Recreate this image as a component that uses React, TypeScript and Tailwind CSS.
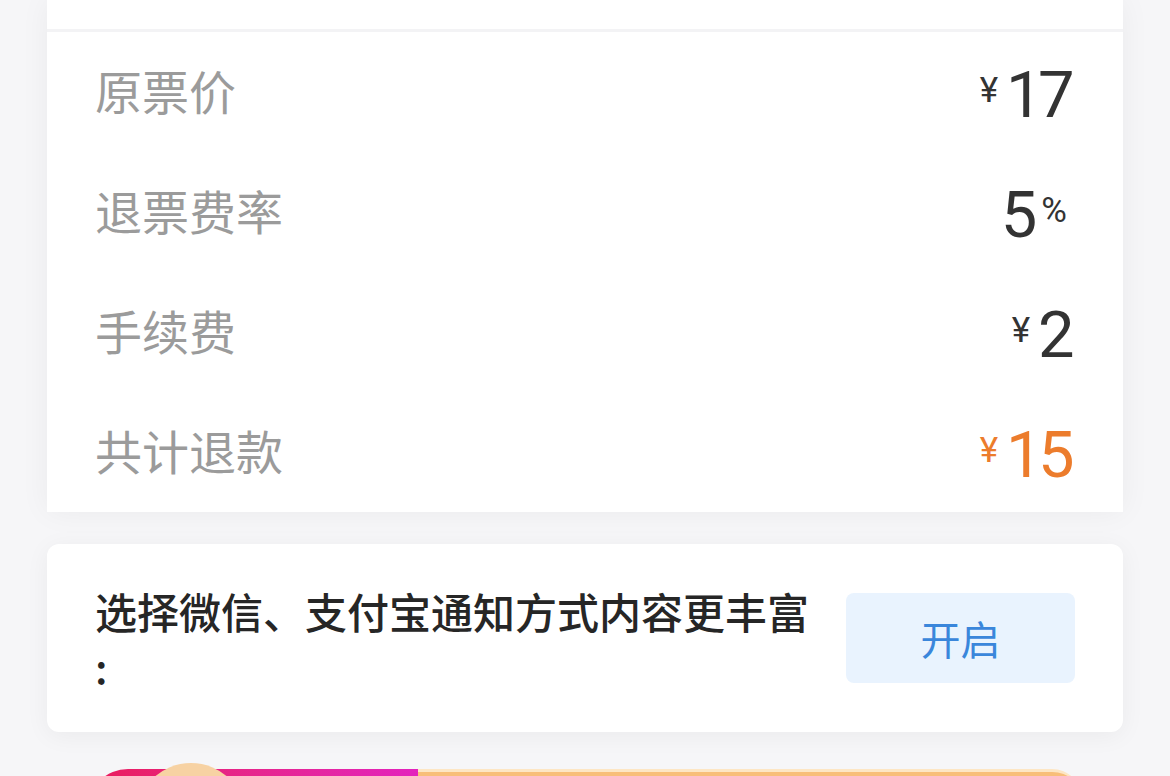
import React from 'react';

const cjk = '"Noto Sans CJK SC", "Noto Sans", sans-serif';
const num = 'Roboto, "Liberation Sans", Arial, sans-serif';

type Row = { label: string; value: string; unit: 'yuan' | 'percent'; accent?: boolean };

const rows: Row[] = [
  { label: '原票价', value: '17', unit: 'yuan' },
  { label: '退票费率', value: '5', unit: 'percent' },
  { label: '手续费', value: '2', unit: 'yuan' },
  { label: '共计退款', value: '15', unit: 'yuan', accent: true },
];

const FeeRow = ({ row }: { row: Row }) => {
  const color = row.accent ? 'text-[#ec7c2c]' : 'text-[#333333]';
  return (
    <div className="flex h-[120px] items-center justify-between px-[48px]">
      <span className="mt-[-4px] text-[47px] text-[#9b9b9b]" style={{ fontFamily: cjk }}>
        {row.label}
      </span>
      {row.unit === 'yuan' ? (
        <span className={`mr-[5px] mt-[6px] flex items-center ${color}`} style={{ fontFamily: num }}>
          <span className="mr-[8px] mt-[-8px] text-[35px]">¥</span>
          <span className="text-[65px] leading-none tracking-[-0.07em]">{row.value}</span>
        </span>
      ) : (
        <span className={`mr-[8px] mt-[6px] flex items-start ${color}`} style={{ fontFamily: num }}>
          <span className="text-[65px] leading-none">{row.value}</span>
          <span className="ml-[4px] mt-[10px] text-[35px] leading-none">%</span>
        </span>
      )}
    </div>
  );
};

export default function App() {
  return (
    <div className="h-[776px] w-[1170px] overflow-hidden bg-[#f6f6f8]">
      <div className="mx-[47px] flex flex-col">
        {/* fee breakdown card */}
        <div className="bg-white shadow-[0_0_28px_rgba(0,0,0,0.05)]">
          <div className="h-[32px] border-b-[3px] border-[#f3f3f5]" />
          {rows.map(r => (
            <FeeRow key={r.label} row={r} />
          ))}
        </div>

        {/* notification card */}
        <div className="mt-[32px] flex h-[188px] items-center justify-between rounded-[12px] bg-white px-[48px] shadow-[0_4px_24px_rgba(0,0,0,0.05)]">
          <p
            className="text-[42px] font-medium leading-[55px] text-[#262626]"
            style={{ fontFamily: cjk }}
          >
            选择微信、支付宝通知方式内容更丰富
            <br />:
          </p>
          <button
            className="flex h-[90px] w-[229px] items-center justify-center rounded-[8px] bg-[#e9f3fe] text-[40px] text-[#3a86db]"
            style={{ fontFamily: cjk }}
          >
            开启
          </button>
        </div>

        {/* banner peeking at the bottom */}
        <div className="relative mt-[37px] mx-[41px] flex h-[40px]">
          <div className="h-full w-[330px] rounded-tl-[40px] bg-gradient-to-r from-[#ea1a5a] to-[#e322bd]" />
          <div className="h-full flex-1 rounded-tr-[30px] border-t-[3px] border-[#fde6c4] bg-[#f8be79]" />
          <div className="absolute left-[48px] top-[-6px] h-[110px] w-[110px] rounded-full bg-[#f7d2a3]" />
        </div>
      </div>
    </div>
  );
}
